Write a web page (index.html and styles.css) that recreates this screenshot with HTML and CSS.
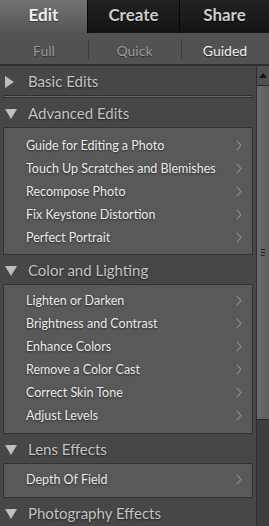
FILE: index.html
```html
<!DOCTYPE html>
<html lang="en">
<head>
    <meta charset="UTF-8">
    <title>Guided Edits</title>
    <link rel="stylesheet" href="styles.css">
</head>
<body>
    <!-- top tabs -->
    <div class="tabs">
        <div class="tab active">Edit</div>
        <div class="tab">Create</div>
        <div class="tab">Share</div>
    </div>
    <div class="subtabs">
        <div class="subtab">Full</div>
        <div class="subtab">Quick</div>
        <div class="subtab active">Guided</div>
    </div>

    <div class="panel">
        <div class="list">
            <div class="section-head closed"><span class="tri"></span>Basic Edits</div>
            <div class="groove"></div>

            <div class="section-head"><span class="tri"></span>Advanced Edits</div>
            <div class="box box-first">
                <div class="item">Guide for Editing a Photo<svg class="chev" width="6" height="11" viewBox="0 0 6 11"><polyline points="0.8,0.8 5,5.5 0.8,10.2"/></svg></div>
                <div class="item">Touch Up Scratches and Blemishes<svg class="chev" width="6" height="11" viewBox="0 0 6 11"><polyline points="0.8,0.8 5,5.5 0.8,10.2"/></svg></div>
                <div class="item">Recompose Photo<svg class="chev" width="6" height="11" viewBox="0 0 6 11"><polyline points="0.8,0.8 5,5.5 0.8,10.2"/></svg></div>
                <div class="item">Fix Keystone Distortion<svg class="chev" width="6" height="11" viewBox="0 0 6 11"><polyline points="0.8,0.8 5,5.5 0.8,10.2"/></svg></div>
                <div class="item">Perfect Portrait<svg class="chev" width="6" height="11" viewBox="0 0 6 11"><polyline points="0.8,0.8 5,5.5 0.8,10.2"/></svg></div>
            </div>

            <div class="section-head"><span class="tri"></span>Color and Lighting</div>
            <div class="box box-tight">
                <div class="item">Lighten or Darken<svg class="chev" width="6" height="11" viewBox="0 0 6 11"><polyline points="0.8,0.8 5,5.5 0.8,10.2"/></svg></div>
                <div class="item">Brightness and Contrast<svg class="chev" width="6" height="11" viewBox="0 0 6 11"><polyline points="0.8,0.8 5,5.5 0.8,10.2"/></svg></div>
                <div class="item">Enhance Colors<svg class="chev" width="6" height="11" viewBox="0 0 6 11"><polyline points="0.8,0.8 5,5.5 0.8,10.2"/></svg></div>
                <div class="item">Remove a Color Cast<svg class="chev" width="6" height="11" viewBox="0 0 6 11"><polyline points="0.8,0.8 5,5.5 0.8,10.2"/></svg></div>
                <div class="item">Correct Skin Tone<svg class="chev" width="6" height="11" viewBox="0 0 6 11"><polyline points="0.8,0.8 5,5.5 0.8,10.2"/></svg></div>
                <div class="item">Adjust Levels<svg class="chev" width="6" height="11" viewBox="0 0 6 11"><polyline points="0.8,0.8 5,5.5 0.8,10.2"/></svg></div>
            </div>

            <div class="section-head"><span class="tri"></span>Lens Effects</div>
            <div class="box box-tight">
                <div class="item">Depth Of Field<svg class="chev" width="6" height="11" viewBox="0 0 6 11"><polyline points="0.8,0.8 5,5.5 0.8,10.2"/></svg></div>
            </div>

            <div class="section-head"><span class="tri"></span>Photography Effects</div>
        </div>

        <!-- scrollbar -->
        <div class="scrollbar">
            <div class="scroll-up"><span class="up-tri"></span></div>
            <div class="thumb"><span class="grip"></span></div>
            <div class="track"></div>
        </div>
    </div>
</body>
</html>
```

FILE: styles.css
```css
html, body {
    margin: 0;
    height: 100%;
    overflow: hidden;
}

body {
    background-color: #474747;
    font-family: Lato, "Open Sans", "Liberation Sans", sans-serif;
    color: #e8e8e8;
}

/* top tabs */
.tabs {
    display: flex;
    height: 33px;
    background-color: #161616;
}

.tab {
    display: flex;
    justify-content: center;
    align-items: center;
    width: 92px;
    padding-bottom: 4px;
    box-sizing: border-box;
    font-size: 17px;
    font-weight: bold;
    color: #cdcdcd;
    background: linear-gradient(#222, #141414);
    border-left: 1px solid #060606;
    text-shadow: 0 1px 1px #000;
}

.tab.active {
    width: 87px;
    border-left: none;
    color: #f2f2f2;
    background: linear-gradient(#737373, #555);
    text-shadow: 0 1px 1px #333;
}

.tab:last-child {
    flex: 1;
}

.subtabs {
    display: flex;
    height: 31px;
    background-color: #525252;
    border-bottom: 2px solid #2e2e2e;
}

.subtab {
    display: flex;
    justify-content: center;
    align-items: center;
    width: 88px;
    padding-top: 3px;
    box-sizing: border-box;
    font-size: 14px;
    color: #9a9a9a;
    text-shadow: 0 1px 1px #2a2a2a;
    position: relative;
}

.subtab:nth-child(2) {
    width: 93px;
}

.subtab:last-child {
    flex: 1;
}

.subtab + .subtab::before {
    content: "";
    position: absolute;
    left: 0;
    top: 6px;
    bottom: 5px;
    width: 1px;
    background-color: #3c3c3c;
}

.subtab.active {
    color: #f0f0f0;
}

/* panel */
.panel {
    display: flex;
    height: 461px;
}

.list {
    flex: 1;
    padding: 0 3px 0 3px;
    overflow: hidden;
}

.section-head {
    display: flex;
    align-items: center;
    height: 29px;
    padding-left: 25px;
    font-size: 15px;
    color: #c4c4c4;
    text-shadow: 0 1px 2px #1e1e1e;
    position: relative;
}

.tri {
    position: absolute;
    left: 2px;
    top: 11px;
    width: 0;
    height: 0;
    border-left: 6px solid transparent;
    border-right: 6px solid transparent;
    border-top: 10px solid #bdbdbd;
}

.section-head.closed .tri {
    left: 2px;
    top: 10px;
    border-top: 6px solid transparent;
    border-bottom: 6px solid transparent;
    border-left: 9px solid #bdbdbd;
    border-right: none;
}

.groove {
    height: 1px;
    border: 1px solid #303030;
    background-color: #6a6a6a;
}

.box {
    padding: 4px 0 7px 0;
    background-color: #595959;
    border: 1px solid #333;
}

.box-first {
    padding: 6px 0 5px 0;
}

.box-tight {
    padding-bottom: 6px;
}

.item {
    display: flex;
    align-items: center;
    justify-content: space-between;
    height: 23px;
    padding: 0 10px 0 22px;
    font-size: 12.5px;
    color: #ebebeb;
    text-shadow: 0 1px 2px #2a2a2a;
}

.chev polyline {
    fill: none;
    stroke: #8e8e8e;
    stroke-width: 1.1;
}

/* scrollbar */
.scrollbar {
    display: flex;
    flex-direction: column;
    width: 12px;
    border-left: 1px solid #2e2e2e;
}

.scroll-up {
    display: flex;
    justify-content: center;
    align-items: center;
    height: 19px;
    background-color: #505050;
    border-bottom: 1px solid #2a2a2a;
}

.up-tri {
    width: 0;
    height: 0;
    border-left: 4px solid transparent;
    border-right: 4px solid transparent;
    border-bottom: 5px solid #151515;
}

.thumb {
    display: flex;
    justify-content: center;
    align-items: center;
    height: 333px;
    background: linear-gradient(90deg, #6a6a6a, #5e5e5e);
    border-bottom: 1px solid #2a2a2a;
}

.grip {
    width: 4px;
    height: 5px;
    border-top: 1px solid #222;
    border-bottom: 1px solid #222;
    position: relative;
}

.grip::after {
    content: "";
    position: absolute;
    left: 0;
    right: 0;
    top: 2px;
    height: 1px;
    background-color: #222;
}

.track {
    flex: 1;
    background-color: #3e3e3e;
}
```
